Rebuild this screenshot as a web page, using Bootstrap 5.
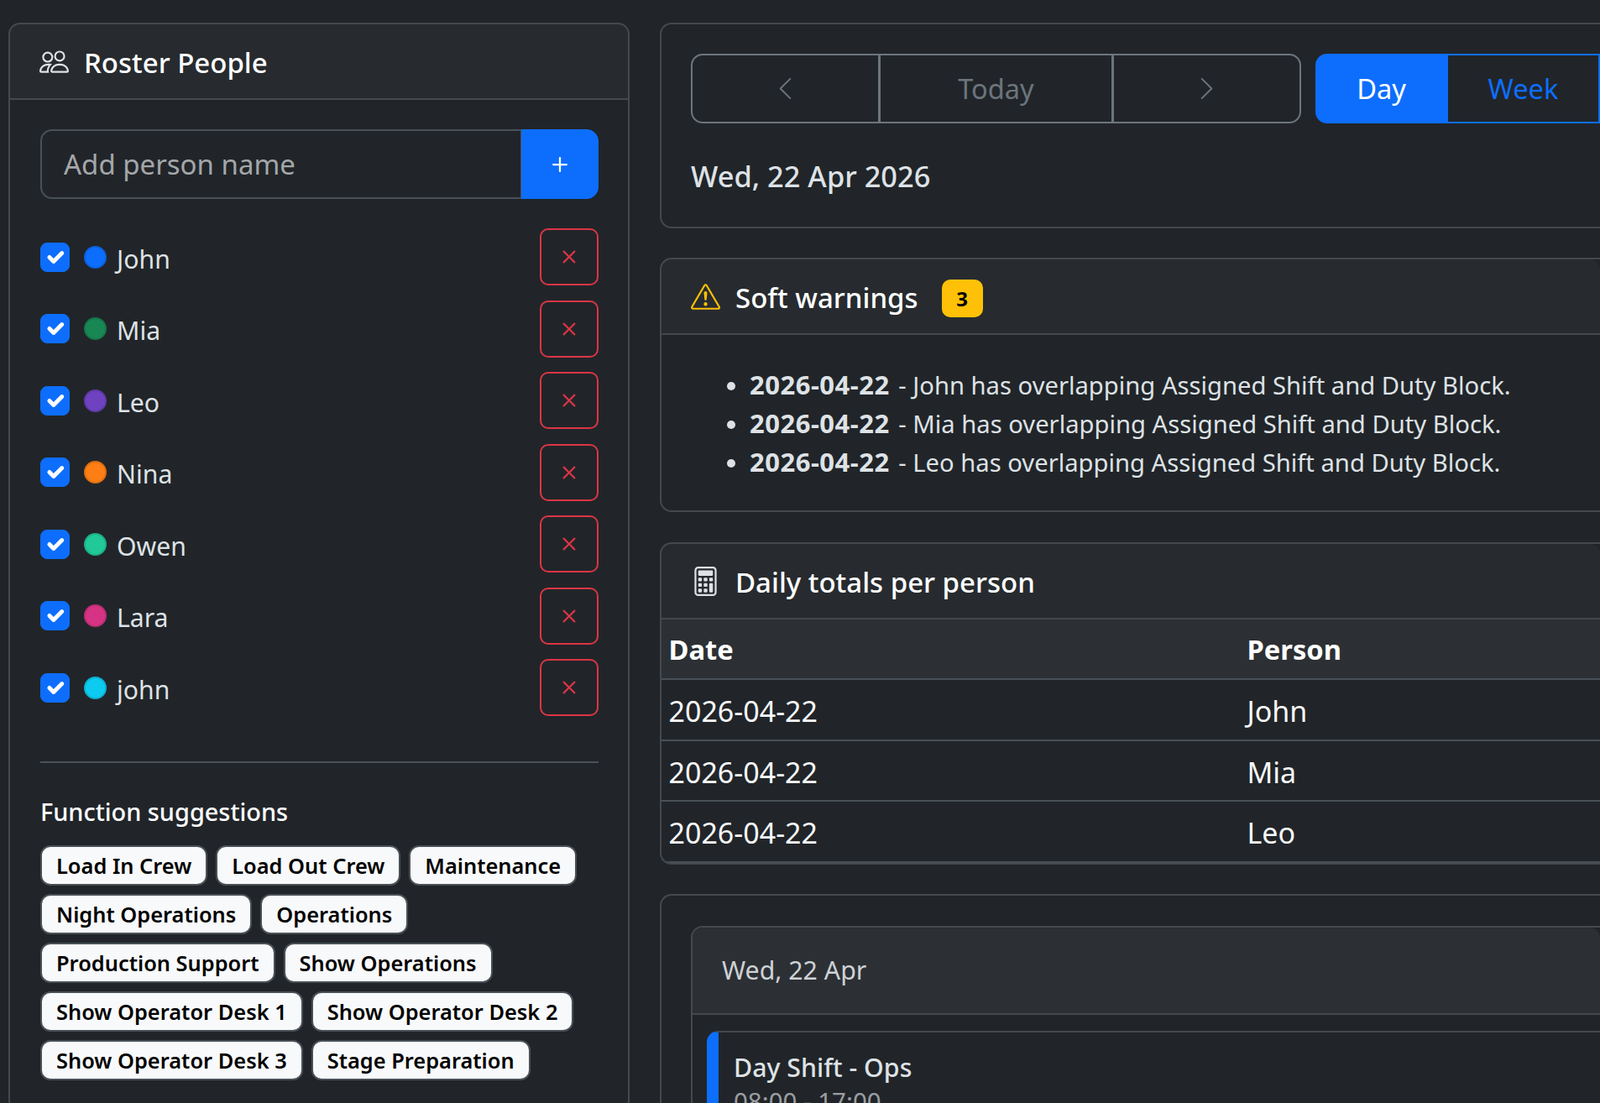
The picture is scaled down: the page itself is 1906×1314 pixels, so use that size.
<!DOCTYPE html>
<html lang="en" data-bs-theme="dark">
<head>
  <meta charset="UTF-8">
  <meta name="viewport" content="width=device-width, initial-scale=1.0">
  <title>Roster</title>
  <link href="https://cdn.jsdelivr.net/npm/bootstrap@5.3.0/dist/css/bootstrap.min.css" rel="stylesheet">
  <style>
    html, body { height: 100%; overflow: hidden; }
    body {
      background-color: #212529;
      color: #dee2e6;
      font-family: "Noto Sans", "Liberation Sans", sans-serif;
      font-size: 30.2px;
      line-height: 46px;
    }

    .page-wrap { padding: 27px 0 0 10px; gap: 36px; }
    .roster-col { flex: 0 0 740px; }
    .main-col { min-width: 0; gap: 35px; }

    .card {
      --bs-card-border-width: 2px;
      --bs-card-border-color: #45494e;
      --bs-card-border-radius: 14px;
      --bs-card-inner-border-radius: 12px;
      --bs-card-bg: #212529;
      --bs-card-cap-bg: rgba(255, 255, 255, .03);
      --bs-card-color: #dee2e6;
    }
    .open-end { border-right: 0; border-top-right-radius: 0; border-bottom-right-radius: 0; }
    .card-header { padding: 0 35px; height: 90px; border-bottom-width: 2px; display: flex; align-items: center; }
    .head-title { font-size: 33px; font-weight: 500; margin: 3px 0 0; line-height: 46px; }
    .head-icon { width: 35px; height: 35px; fill: currentColor; margin-right: 18px; flex: none; }

    .roster-body { padding: 35px 35px 36px 36px; }
    .form-control, .input-group .btn { font-size: 33px; line-height: 46px; }
    .name-input { height: 83px; background: transparent; border: 2px solid #495057; border-radius: 14px; padding: 0 26px; }
    .name-input::placeholder { color: #a4a7aa; }
    .add-btn { width: 92px; border-radius: 14px; padding: 0; display: flex; align-items: center; justify-content: center; }
    .add-btn svg { width: 36px; height: 36px; fill: #fff; }

    .people-list { margin-top: 35px; gap: 17.5px; }
    .person-row { height: 68px; }
    .form-check-input.tick { width: 35px; height: 35px; margin: 0 17px 0 0; border-radius: 8px; flex: none; }
    .person-dot { width: 27px; height: 27px; border-radius: 50%; margin-right: 12px; flex: none; box-shadow: inset 0 0 0 2px rgba(0, 0, 0, .12); }
    .person-name { margin-top: 5px; }
    .del-btn { width: 70px; height: 68px; padding: 0; border-width: 2px; border-radius: 10px; display: flex; align-items: center; justify-content: center; }
    .del-btn svg { width: 34px; height: 34px; fill: currentColor; }

    .roster-rule { margin: 54px 0 35px; border-top: 2px solid #495057; opacity: 1; }
    .fn-title { font-size: 28.9px; font-weight: 500; line-height: 46px; margin: 0 0 17px; }
    .fn-pills { gap: 10px; }
    .fn-pill {
      background: #f8f9fa;
      color: #000;
      border: 2px solid #495057;
      border-radius: 12px;
      font-size: 25.4px;
      font-weight: 600;
      line-height: 44px;
      padding: 0 17px;
    }

    .toolbar-body { padding: 35px 0 37px 35px; }
    .toolbar-row { gap: 17px; }
    .pager { flex: 0 0 727px; }
    .pager .btn, .view-switch .btn { font-size: 32.6px; line-height: 46px; height: 83px; border-width: 2px; --bs-btn-border-radius: 14px; display: flex; align-items: center; justify-content: center; padding: 0; }
    .pager .btn { --bs-btn-color: #6c757d; --bs-btn-border-color: #6c757d; }
    .pager .btn svg { width: 31px; height: 31px; fill: currentColor; }
    .pager .pager-side { flex: 0 0 225px; }
    .pager .pager-mid { flex: 1 1 auto; }
    .view-switch { flex: 1 1 auto; }
    .view-switch .view-day { flex: 0 0 157px; }
    .view-switch .view-week { flex: 1 1 auto; border-top-right-radius: 0; border-bottom-right-radius: 0; }
    .date-title { font-size: 34.4px; font-weight: 500; margin: 40px 0 0; line-height: 46px; }

    .warn-icon { color: #ffc107; }
    .warn-badge { background: #ffc107; color: #000; width: 49px; height: 45px; border-radius: 10px; font-size: 24px; font-weight: 700; display: flex; align-items: center; justify-content: center; margin: 5px 0 0 28px; }
    .warn-body { padding: 37px 35px 34px; }
    .warn-list { margin: 0; padding-left: 70px; font-size: 29.2px; }
    .warn-list li { height: 46px; }
    .warn-list strong { font-size: 31px; line-height: 1; font-weight: 700; letter-spacing: .5px; margin-right: 3px; }

    .totals-table { margin: 0; --bs-table-bg: transparent; --bs-table-color: #dee2e6; --bs-table-border-color: #495057; }
    .totals-table th, .totals-table td { padding: 14px 8.5px 10.6px; border-bottom-width: 2px; font-size: 34px; line-height: 46px; }
    .totals-table thead th { background: #2c3034; color: #fff; font-size: 32.7px; font-weight: 700; border-bottom-width: 2px; padding-top: 13px; padding-bottom: 11px; }
    .totals-table td { color: #f8f9fa; }
    .date-col { width: 689px; }
    .totals-wrap { margin-top: 1px; }

    .day-outer { padding: 36px 0 0 35px; }
    .day-head { background: #2c3034; height: 104px; padding: 1px 35px 0; font-size: 30.3px; color: #ced2d6; }
    .day-inner { padding: 19px 0 0 17px; }
    .shift-card { border-left: 14px solid #0d6efd; border-top: 2px solid #45494e; border-top-left-radius: 14px; padding: 19px 18px; }
    .shift-name { font-size: 30.3px; font-weight: 500; line-height: 46px; }
    .shift-time { font-size: 29.5px; line-height: 34px; color: #9a9ea2; }
  </style>
</head>
<body>
<div class="d-flex align-items-start page-wrap">
  <div class="roster-col">
    <div class="card">
      <div class="card-header">
        <svg class="head-icon" viewBox="0 0 16 16"><path d="M15 14s1 0 1-1-1-4-5-4-5 3-5 4 1 1 1 1h8Zm-7.978-1A.261.261 0 0 1 7 12.996c.001-.264.167-1.03.76-1.72C8.312 10.629 9.282 10 11 10c1.717 0 2.687.63 3.24 1.276.593.69.758 1.457.76 1.72l-.008.002a.274.274 0 0 1-.014.002H7.022ZM11 7a2 2 0 1 0 0-4 2 2 0 0 0 0 4Zm3-2a3 3 0 1 1-6 0 3 3 0 0 1 6 0ZM6.936 9.28a5.88 5.88 0 0 0-1.23-.247A7.35 7.35 0 0 0 5 9c-4 0-5 3-5 4 0 .667.333 1 1 1h4.216A2.238 2.238 0 0 1 5 13c0-1.01.377-2.042 1.09-2.904.243-.294.526-.569.846-.816ZM4.92 10A5.493 5.493 0 0 0 4 13H1c0-.26.164-1.03.76-1.724.545-.636 1.492-1.256 3.16-1.275ZM1.5 5.5a3 3 0 1 1 6 0 3 3 0 0 1-6 0Zm3-2a2 2 0 1 0 0 4 2 2 0 0 0 0-4Z"/></svg>
        <h5 class="head-title">Roster People</h5>
      </div>
      <div class="roster-body">
        <div class="input-group">
          <input type="text" class="form-control name-input" placeholder="Add person name">
          <button class="btn btn-primary add-btn" type="button"><svg viewBox="0 0 16 16"><path d="M8 4a.5.5 0 0 1 .5.5v3h3a.5.5 0 0 1 0 1h-3v3a.5.5 0 0 1-1 0v-3h-3a.5.5 0 0 1 0-1h3v-3A.5.5 0 0 1 8 4z"/></svg></button>
        </div>

        <div class="d-flex flex-column people-list" id="peopleList"></div>

        <hr class="roster-rule">
        <h6 class="fn-title">Function suggestions</h6>
        <div class="d-flex flex-wrap fn-pills" id="fnPills"></div>
      </div>
    </div>
  </div>

  <div class="flex-grow-1 d-flex flex-column main-col">
    <div class="card open-end">
      <div class="toolbar-body">
        <div class="d-flex toolbar-row">
          <div class="btn-group pager">
            <button class="btn btn-outline-secondary pager-side" type="button"><svg viewBox="0 0 16 16"><path fill-rule="evenodd" d="M11.354 1.646a.5.5 0 0 1 0 .708L5.707 8l5.647 5.646a.5.5 0 0 1-.708.708l-6-6a.5.5 0 0 1 0-.708l6-6a.5.5 0 0 1 .708 0z"/></svg></button>
            <button class="btn btn-outline-secondary pager-mid" type="button">Today</button>
            <button class="btn btn-outline-secondary pager-side" type="button"><svg viewBox="0 0 16 16"><path fill-rule="evenodd" d="M4.646 1.646a.5.5 0 0 1 .708 0l6 6a.5.5 0 0 1 0 .708l-6 6a.5.5 0 0 1-.708-.708L10.293 8 4.646 2.354a.5.5 0 0 1 0-.708z"/></svg></button>
          </div>
          <div class="btn-group view-switch">
            <button class="btn btn-primary view-day" type="button">Day</button>
            <button class="btn btn-outline-primary view-week" type="button">Week</button>
          </div>
        </div>
        <div class="date-title">Wed, 22 Apr 2026</div>
      </div>
    </div>

    <div class="card open-end">
      <div class="card-header">
        <svg class="head-icon warn-icon" viewBox="0 0 16 16"><path d="M7.938 2.016A.13.13 0 0 1 8.002 2a.13.13 0 0 1 .063.016.146.146 0 0 1 .054.057l6.857 11.667c.036.06.035.124.002.183a.163.163 0 0 1-.054.06.116.116 0 0 1-.066.017H1.146a.115.115 0 0 1-.066-.017.163.163 0 0 1-.054-.06.176.176 0 0 1 .002-.183L7.884 2.073a.147.147 0 0 1 .054-.057zm1.044-.45a1.13 1.13 0 0 0-1.96 0L.165 13.233c-.457.778.091 1.767.98 1.767h13.713c.889 0 1.438-.99.98-1.767L8.982 1.566z"/><path d="M7.002 12a1 1 0 1 1 2 0 1 1 0 0 1-2 0zM7.1 5.995a.905.905 0 1 1 1.8 0l-.35 3.507a.552.552 0 0 1-1.1 0L7.1 5.995z"/></svg>
        <h5 class="head-title">Soft warnings</h5>
        <span class="warn-badge">3</span>
      </div>
      <div class="warn-body">
        <ul class="warn-list">
          <li><strong>2026-04-22</strong> - John has overlapping Assigned Shift and Duty Block.</li>
          <li><strong>2026-04-22</strong> - Mia has overlapping Assigned Shift and Duty Block.</li>
          <li><strong>2026-04-22</strong> - Leo has overlapping Assigned Shift and Duty Block.</li>
        </ul>
      </div>
    </div>

    <div class="card open-end overflow-hidden totals-wrap">
      <div class="card-header">
        <svg class="head-icon" viewBox="0 0 16 16"><path d="M12 1a1 1 0 0 1 1 1v12a1 1 0 0 1-1 1H4a1 1 0 0 1-1-1V2a1 1 0 0 1 1-1h8zM4 0a2 2 0 0 0-2 2v12a2 2 0 0 0 2 2h8a2 2 0 0 0 2-2V2a2 2 0 0 0-2-2H4z"/><path d="M4 2.5a.5.5 0 0 1 .5-.5h7a.5.5 0 0 1 .5.5v2a.5.5 0 0 1-.5.5h-7a.5.5 0 0 1-.5-.5v-2zm0 4a.5.5 0 0 1 .5-.5h1a.5.5 0 0 1 .5.5v1a.5.5 0 0 1-.5.5h-1a.5.5 0 0 1-.5-.5v-1zm0 3a.5.5 0 0 1 .5-.5h1a.5.5 0 0 1 .5.5v1a.5.5 0 0 1-.5.5h-1a.5.5 0 0 1-.5-.5v-1zm0 3a.5.5 0 0 1 .5-.5h1a.5.5 0 0 1 .5.5v1a.5.5 0 0 1-.5.5h-1a.5.5 0 0 1-.5-.5v-1zm3-6a.5.5 0 0 1 .5-.5h1a.5.5 0 0 1 .5.5v1a.5.5 0 0 1-.5.5h-1a.5.5 0 0 1-.5-.5v-1zm0 3a.5.5 0 0 1 .5-.5h1a.5.5 0 0 1 .5.5v1a.5.5 0 0 1-.5.5h-1a.5.5 0 0 1-.5-.5v-1zm0 3a.5.5 0 0 1 .5-.5h1a.5.5 0 0 1 .5.5v1a.5.5 0 0 1-.5.5h-1a.5.5 0 0 1-.5-.5v-1zm3-6a.5.5 0 0 1 .5-.5h1a.5.5 0 0 1 .5.5v1a.5.5 0 0 1-.5.5h-1a.5.5 0 0 1-.5-.5v-1zm0 3a.5.5 0 0 1 .5-.5h1a.5.5 0 0 1 .5.5v4a.5.5 0 0 1-.5.5h-1a.5.5 0 0 1-.5-.5v-4z"/></svg>
        <h5 class="head-title">Daily totals per person</h5>
      </div>
      <table class="table totals-table">
        <thead>
          <tr><th class="date-col">Date</th><th>Person</th></tr>
        </thead>
        <tbody>
          <tr><td>2026-04-22</td><td>John</td></tr>
          <tr><td>2026-04-22</td><td>Mia</td></tr>
          <tr><td>2026-04-22</td><td>Leo</td></tr>
        </tbody>
      </table>
    </div>

    <div class="card open-end">
      <div class="day-outer">
        <div class="card open-end">
          <div class="card-header day-head">Wed, 22 Apr</div>
          <div class="day-inner">
            <div class="shift-card">
              <div class="shift-name">Day Shift - Ops</div>
              <div class="shift-time">08:00 - 17:00</div>
            </div>
          </div>
        </div>
      </div>
    </div>
  </div>
</div>

<script src="https://cdn.jsdelivr.net/npm/bootstrap@5.3.0/dist/js/bootstrap.bundle.min.js"></script>
<script>
  const people = [
    ['John', '#0d6efd'],
    ['Mia', '#198754'],
    ['Leo', '#6f42c1'],
    ['Nina', '#fd7e14'],
    ['Owen', '#20c997'],
    ['Lara', '#d63384'],
    ['john', '#0dcaf0'],
  ];
  const functions = [
    'Load In Crew', 'Load Out Crew', 'Maintenance', 'Night Operations', 'Operations',
    'Production Support', 'Show Operations', 'Show Operator Desk 1', 'Show Operator Desk 2',
    'Show Operator Desk 3', 'Stage Preparation',
  ];

  const peopleList = document.getElementById('peopleList');
  people.forEach(([name, color]) => {
    const row = document.createElement('div');
    row.className = 'd-flex align-items-center person-row';
    row.innerHTML = `
      <input class="form-check-input tick" type="checkbox" checked>
      <span class="person-dot" style="background-color: ${color}"></span>
      <span class="person-name flex-grow-1">${name}</span>
      <button class="btn btn-outline-danger del-btn" type="button"><svg viewBox="0 0 16 16"><path d="M4.646 4.646a.5.5 0 0 1 .708 0L8 7.293l2.646-2.647a.5.5 0 0 1 .708.708L8.707 8l2.647 2.646a.5.5 0 0 1-.708.708L8 8.707l-2.646 2.647a.5.5 0 0 1-.708-.708L7.293 8 4.646 5.354a.5.5 0 0 1 0-.708z"/></svg></button>
    `;
    peopleList.appendChild(row);
  });

  const fnPills = document.getElementById('fnPills');
  functions.forEach((label) => {
    const pill = document.createElement('span');
    pill.className = 'fn-pill';
    pill.textContent = label;
    fnPills.appendChild(pill);
  });
</script>
</body>
</html>
